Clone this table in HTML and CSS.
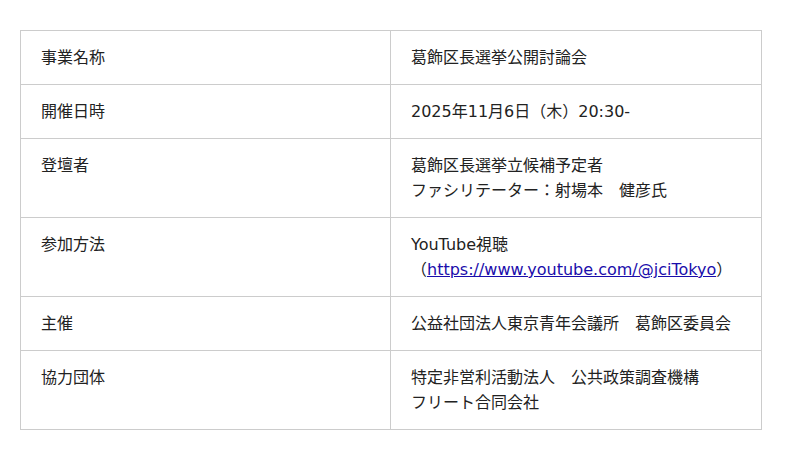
FILE: index.html
```html
<!DOCTYPE html>
<html lang="ja">
<head>
<meta charset="utf-8">
<link rel="stylesheet" href="styles.css">
</head>
<body>
<table class="info">
  <tr><th>事業名称</th><td>葛飾区長選挙公開討論会</td></tr>
  <tr><th>開催日時</th><td>2025年11月6日（木）20:30-</td></tr>
  <tr><th>登壇者</th><td>葛飾区長選挙立候補予定者<br>ファシリテーター：射場本　健彦氏</td></tr>
  <tr><th>参加方法</th><td>YouTube視聴<br>（<a href="#">https://www.youtube.com/@jciTokyo</a>）</td></tr>
  <tr><th>主催</th><td>公益社団法人東京青年会議所　葛飾区委員会</td></tr>
  <tr><th>協力団体</th><td>特定非営利活動法人　公共政策調査機構<br>フリート合同会社</td></tr>
</table>
</body>
</html>
```
FILE: styles.css
```css
html, body {
  margin: 0;
  padding: 0;
  background: #fff;
}
body {
  padding: 30px 38px 0 20px;
  font-family: "DejaVu Sans", "Noto Sans CJK JP", sans-serif;
  font-size: 16px;
  color: #222;
}
.info {
  width: 742px;
  border-collapse: collapse;
  table-layout: fixed;
}
.info th, .info td {
  border: 1px solid #ccc;
  padding: 14px 20px;
  line-height: 25px;
  text-align: left;
  vertical-align: top;
  font-weight: normal;
}
.info th {
  width: 329px;
}
.info a {
  color: #1a0dab;
  text-decoration: underline;
}
```
